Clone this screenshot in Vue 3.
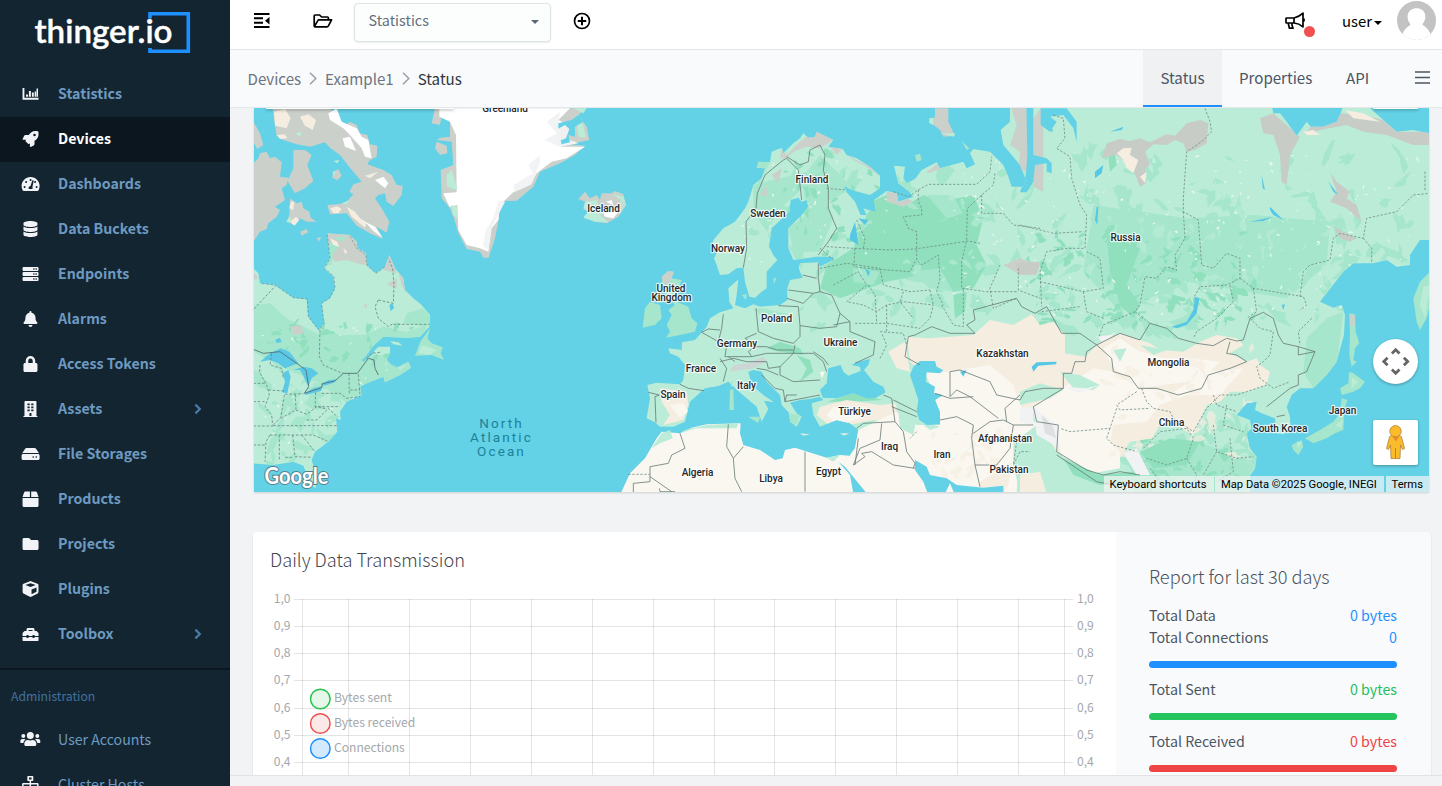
<script setup>
const menu = [
  { label: 'Statistics', icon: 'chart' },
  { label: 'Devices', icon: 'rocket', active: true },
  { label: 'Dashboards', icon: 'gauge' },
  { label: 'Data Buckets', icon: 'database' },
  { label: 'Endpoints', icon: 'server' },
  { label: 'Alarms', icon: 'bell' },
  { label: 'Access Tokens', icon: 'lock' },
  { label: 'Assets', icon: 'building', more: true },
  { label: 'File Storages', icon: 'hdd' },
  { label: 'Products', icon: 'box' },
  { label: 'Projects', icon: 'folder' },
  { label: 'Plugins', icon: 'cube' },
  { label: 'Toolbox', icon: 'toolbox', more: true },
]
const admin = [
  { label: 'User Accounts', icon: 'users' },
  { label: 'Cluster Hosts', icon: 'sitemap' },
]
const icons = {
  chart: { w: 512, d: 'M0 64h60v312h452v64H0zM112 272h64v72h-64zM204 160h64v184h-64zM300 208h60v136h-60zM388 176h48v168h-48zM448 80h48v264h-48z' },
  rocket: { w: 512, d: 'M505 19c-1-6-6-11-12-12C461 0 436 0 411 0 308 0 246 55 200 128H95c-16 0-35 12-43 26L3 253c-7 14 1 24 14 24h101l-19 26c-9 12-6 22 3 32l76 76c10 9 20 12 32 3l26-21v104c0 12 12 19 23 14l99-50c14-7 26-26 26-43V312c73-46 128-108 128-211 0-25 0-50-7-82zM384 168a40 40 0 1 1 0-80 40 40 0 0 1 0 80z' },
  gauge: { w: 576, d: 'M288 32C129 32 0 161 0 320c0 53 14 102 39 145 6 9 16 15 27 15h444c11 0 21-6 27-15 25-43 39-92 39-145C576 161 447 32 288 32zM96 384a32 32 0 1 1 0-64 32 32 0 0 1 0 64zm48-160a32 32 0 1 1 0-64 32 32 0 0 1 0 64zm144-128a32 32 0 1 1 0 64 32 32 0 0 1 0-64zm58 256c4 9 6 21 6 32 0 12-3 23-9 32H233c-6-9-9-20-9-32 0-34 26-62 60-64l56-171c10-28 52-16 46 15zm86-128a32 32 0 1 1 0-64 32 32 0 0 1 0 64zm48 160a32 32 0 1 1 0-64 32 32 0 0 1 0 64z' },
  database: { w: 448, d: 'M448 73v46c0 40-100 73-224 73S0 159 0 119V73C0 33 100 0 224 0s224 33 224 73zm0 103v103c0 40-100 73-224 73S0 319 0 279V176c48 33 136 48 224 48s176-15 224-48zm0 160v103c0 40-100 73-224 73S0 479 0 439V336c48 33 136 48 224 48s176-15 224-48z' },
  server: { w: 512, d: 'M24 32h464l24 24v80l-24 24H24L0 136V56zm320 40v48h40V72zm72 0v48h40V72zM24 192h464l24 24v80l-24 24H24L0 296v-80zm320 40v48h40v-48zm72 0v48h40v-48zM24 352h464l24 24v80l-24 24H24L0 456v-80zm320 40v48h40v-48zm72 0v48h40v-48z' },
  bell: { w: 448, d: 'M224 512c35 0 64-29 64-64H160c0 35 28 64 64 64zm215-150c-19-21-55-52-55-154 0-78-54-140-128-155V32a32 32 0 1 0-64 0v21C118 68 64 130 64 208c0 102-36 133-55 154-19 22-5 54 23 54h384c28 0 42-33 23-54z' },
  lock: { w: 448, d: 'M400 224h-24v-72a152 152 0 1 0-304 0v72H48c-26 0-48 22-48 48v192c0 26 22 48 48 48h352c26 0 48-22 48-48V272c0-26-22-48-48-48zm-104 0H152v-72a72 72 0 1 1 144 0z' },
  building: { w: 448, d: 'M436 480h-20V24c0-13-11-24-24-24H56C43 0 32 11 32 24v456H12c-7 0-12 5-12 12v20h448v-20c0-7-5-12-12-12zM128 76h72v56h-72zm0 96h72v56h-72zm0 96h72v56h-72zm64 212V384h64v96zm128-156h-72v-56h72zm0-96h-72v-56h72zm0-96h-72V76h72z' },
  hdd: { w: 576, d: 'M576 304v96c0 26-22 48-48 48H48c-26 0-48-22-48-48v-96c0-26 22-48 48-48h480c26 0 48 22 48 48zm-48-80a80 80 0 0 1 31 6L462 85c-10-13-25-21-41-21H155c-16 0-31 8-41 21L17 230a80 80 0 0 1 31-6zM352 325v54h40v-54zm96 0v54h40v-54z' },
  box: { w: 512, d: 'M509 184L464 46c-6-19-24-30-46-30H276v176h234c0-3 0-5-1-8zM236 16H94c-20 0-38 11-44 30L3 184l-2 8h235zM0 224v240c0 26 22 48 48 48h416c26 0 48-22 48-48V224z' },
  folder: { w: 512, d: 'M464 128H272l-64-64H48C22 64 0 86 0 112v288c0 26 22 48 48 48h416c26 0 48-22 48-48V176c0-26-22-48-48-48z' },
  cube: { w: 512, d: 'M239 6L33 84C14 91 2 108 2 128v225c0 18 10 35 26 43l206 110c14 7 30 7 44 0l206-110c16-8 26-25 26-43V128c0-20-12-37-31-44L273 6c-11-4-23-4-34 0zm17 62l165 58v2l-165 67L91 128v-2zm32 356V275l160-65v132z' },
  toolbox: { w: 512, d: 'M503 215l-46-46c-6-6-14-9-22-9h-51v-48c0-26-22-48-48-48H176c-26 0-48 22-48 48v48H77c-8 0-16 3-22 9L9 215c-6 6-9 14-9 22v83h128v-32h64v32h128v-32h64v32h128v-83c0-8-3-16-9-22zm-183-55H192v-32h128zm64 224h-64v-32H192v32h-64v-32H0v96c0 18 14 32 32 32h448c18 0 32-14 32-32v-96H384z' },
  users: { w: 640, d: 'M96 224a64 64 0 1 0 0-128 64 64 0 0 0 0 128zm448 0a64 64 0 1 0 0-128 64 64 0 0 0 0 128zm32 32h-64c-18 0-34 7-45 19 40 22 69 62 75 109h66c18 0 32-14 32-32v-32c0-35-29-64-64-64zm-256 0a112 112 0 1 0 0-224 112 112 0 0 0 0 224zm77 32h-8c-42 20-96 20-138 0h-8c-64 0-115 52-115 115v29c0 26 21 48 48 48h288c26 0 48-22 48-48v-29c0-63-52-115-115-115zm-224-13c-11-12-27-19-45-19H64c-35 0-64 29-64 64v32c0 18 14 32 32 32h66c6-47 35-87 75-109z' },
  sitemap: { w: 640, d: 'M128 352H32c-18 0-32 14-32 32v96c0 18 14 32 32 32h96c18 0 32-14 32-32v-96c0-18-14-32-32-32zm-24-80h192v48h48v-48h192v48h48v-57c0-21-18-39-39-39H344v-64h40c18 0 32-14 32-32V32c0-18-14-32-32-32H256c-18 0-32 14-32 32v96c0 18 14 32 32 32h40v64H95c-21 0-39 18-39 39v57h48zM280 50h80v60h-80zm88 302h-96c-18 0-32 14-32 32v96c0 18 14 32 32 32h96c18 0 32-14 32-32v-96c0-18-14-32-32-32zm240 0h-96c-18 0-32 14-32 32v96c0 18 14 32 32 32h96c18 0 32-14 32-32v-96c0-18-14-32-32-32z' },
}

const mapLabels = [
  [505, 111.5, 'Greenland'], [603.5, 212, 'Iceland'], [812, 183, 'Finland'], [768, 217, 'Sweden'],
  [728, 252, 'Norway'], [671, 291.5, 'United'], [671.5, 301, 'Kingdom'], [776.5, 322, 'Poland'],
  [840.5, 346, 'Ukraine'], [737, 347, 'Germany'], [701, 371.5, 'France'], [746.5, 388.5, 'Italy'],
  [673, 398, 'Spain'], [854.5, 415, 'Türkiye'], [889.5, 449.5, 'Iraq'], [942, 458, 'Iran'],
  [697.5, 475.5, 'Algeria'], [771, 481.5, 'Libya'], [828.5, 474.5, 'Egypt'], [1002.5, 356.5, 'Kazakhstan'],
  [1005, 442, 'Afghanistan'], [1009, 472.5, 'Pakistan'], [1125.5, 241, 'Russia'], [1168.5, 365.5, 'Mongolia'],
  [1171.5, 425.5, 'China'], [1280, 432, 'South Korea'], [1342.5, 414, 'Japan'],
]

// Deterministic vegetation patches, clipped to the land outlines
let seed = 11
const rnd = () => ((seed = (seed * 16807) % 2147483647) / 2147483647)
function patches(n, x, y, w, h, size) {
  let d = ''
  for (let i = 0; i < n; i++) {
    const cx = x + rnd() * w
    const cy = y + rnd() * h
    const r = size * (0.35 + rnd())
    const turn = rnd() * Math.PI
    const flat = 0.35 + rnd() * 0.5
    for (let k = 0; k < 9; k++) {
      const a = (k / 9) * Math.PI * 2
      const q = r * (0.4 + rnd() * 1.1)
      const px = Math.cos(a) * q * 1.4
      const py = Math.sin(a) * q * flat
      d += `${k ? 'L' : 'M'}${(cx + px * Math.cos(turn) - py * Math.sin(turn)).toFixed(0)} ${(cy + px * Math.sin(turn) + py * Math.cos(turn)).toFixed(0)}`
    }
    d += 'Z'
  }
  return d
}
const eastMid = patches(190, 400, 130, 2000, 560, 24) + patches(90, 1500, 950, 420, 220, 18)
const eastLight = patches(260, 700, 220, 1700, 450, 13)
const eastDark = patches(110, 1200, 380, 700, 290, 12) + patches(50, 480, 120, 330, 330, 11) + patches(26, 1560, 1000, 300, 150, 12)
const eastSpeck = patches(260, 1000, 150, 1400, 480, 3.6) + patches(60, 300, 130, 500, 350, 3.6)
const westMid = patches(60, 10, 760, 330, 320, 18)
const westDark = patches(36, 60, 660, 430, 110, 11)
const westSpeck = patches(60, 10, 650, 500, 400, 3.4)
const sand = patches(60, 1450, 720, 450, 330, 15) + patches(30, 940, 970, 220, 150, 12)

const eurasia = 'M105 952L80 940 90 880 82 840 110 833 180 838 190 825 195 780 175 755 150 745 145 730 185 735 186 712 225 705 260 665 270 640 300 622 340 610 328 590 325 550 355 523 350 570 345 600 375 610 400 598 420 605 480 600 502 585 502 550 510 525 548 518 536 490 540 475 595 472 600 485 640 465 640 455 590 455 520 465 505 430 505 370 545 330 565 305 560 285 545 290 535 278 512 285 508 320 455 370 447 425 460 450 472 465 440 500 440 550 425 560 405 578 388 575 375 530 370 488 350 490 325 508 300 510 290 480 282 460 292 440 275 425 280 405 310 370 345 350 375 310 385 290 400 240 425 220 435 190 410 188 415 170 450 172 455 140 485 128 490 145 520 115 540 100 550 85 565 98 585 95 590 80 640 105 625 125 668 132 680 150 710 160 750 185 780 212 780 250 750 270 705 258 670 242 680 262 705 290 722 330 740 330 730 310 768 322 762 285 800 258 830 265 835 290 880 275 868 260 835 235 822 182 855 185 850 220 860 235 885 222 905 195 950 172 960 190 1030 170 1040 190 1065 178 1050 145 1060 132 1110 140 1150 180 1165 215 1175 245 1210 245 1218 225 1200 180 1150 120 1142 75 1170 50 1170 0H1955L1960 25 1980 25 2000 50 2030 92 2060 50 2072 65 2110 65 2150 50 2162 25 2170 0H2240L2290 45 2330 80 2380 75 2450 90V405H2400L2370 450 2370 480 2330 485 2300 465 2260 475 2200 475 2170 500 2100 590 2140 608 2165 600 2175 630 2172 690 2150 770 2120 810 2080 850 2040 850 2015 870 2000 905 2010 935 2012 965 1990 988 1970 985 1965 940 1925 925 1905 915 1910 890 1880 895 1850 930 1890 945 1895 970 1880 985 1890 1030 1910 1055 1905 1090 1890 1112V1170H690L690 1050 705 1030 715 975 690 955 650 945 600 965 580 930 575 895 610 885 600 875 570 882 540 885 510 893 530 925 545 935 530 965 510 950 508 925 485 900 480 870 440 830 425 800 400 795 385 800 395 840 430 870 462 892 432 887 445 912 425 950 410 905 345 850 325 830 295 843 255 850 210 890 195 950 160 965 120 965Z'
const africa = 'M0 1170L30 1105 75 1060 110 1000 125 980 180 985 215 968 260 958 362 955 360 985 370 1020 420 1035 465 1065 488 1060 495 1035 525 1028 620 1058 660 1050 690 1052 700 1080 760 1170Z'
const america = 'M10 490L25 505 30 535 75 540 130 578 170 582 175 635 205 675 222 655 215 595 240 580 255 550 250 515 222 490 240 460 232 385 300 390 320 410 322 430 348 445 350 480 378 505 405 485 418 450 435 490 460 520 465 555 490 580 515 600 540 630 538 665 510 695 475 698 400 695 370 722 335 770 370 740 385 725 420 725 420 745 410 765 425 780 440 788 475 770 483 788 450 810 405 832 400 815 350 835 330 845 335 870 290 890 270 920 272 945 258 938 262 980 235 1010 195 1040 185 1065 205 1130 195 1150 180 1130 160 1082 130 1070 70 1080 10 1075Z'

const yTicks = ['1,0', '0,9', '0,8', '0,7', '0,6', '0,5', '0,4'].map((t, i) => ({ t, y: Math.round(67 + i * 27.15) + 0.5 }))
const vLines = [49.5, 95.5, 156.5, 217.5, 278.5, 339.5, 400.5, 461.5, 521.5, 582.5, 643.5, 704.5, 765.5, 811.5]
const legend = [
  { t: 'Bytes sent', c: 'green', y: 167 },
  { t: 'Bytes received', c: 'red', y: 191.5 },
  { t: 'Connections', c: 'blue', y: 216.5 },
]
</script>

<template>
  <div class="app">
    <aside class="sidebar">
      <div class="brand">
        <svg width="230" height="72" viewBox="0 0 230 72">
          <path d="M150 18.500V13.700H188.300V51.300H150V48" fill="none" stroke="#1e8fff" stroke-width="3.600" />
          <text x="34.500" y="43" textLength="138" lengthAdjust="spacingAndGlyphs" class="logo">thinger.io</text>
        </svg>
      </div>
      <nav>
        <a v-for="m in menu" :key="m.label" class="item" :class="{ active: m.active }">
          <span class="ico"><svg :viewBox="`0 0 ${icons[m.icon].w} 512`" height="16" :width="icons[m.icon].w / 30"><path :d="icons[m.icon].d" fill-rule="evenodd" /></svg></span>
          <span class="txt">{{ m.label }}</span>
          <svg v-if="m.more" class="chev" width="8" height="12" viewBox="0 0 8 12"><path d="M1.400 1.600L5.800 6 1.400 10.400" fill="none" stroke="currentColor" stroke-width="2.200" /></svg>
        </a>
      </nav>
      <div class="section">Administration</div>
      <nav>
        <a v-for="m in admin" :key="m.label" class="item thin">
          <span class="ico"><svg :viewBox="`0 0 ${icons[m.icon].w} 512`" height="16" :width="icons[m.icon].w / 31"><path :d="icons[m.icon].d" fill-rule="evenodd" /></svg></span>
          <span class="txt">{{ m.label }}</span>
        </a>
      </nav>
    </aside>

    <main class="main">
      <header class="topbar">
        <svg class="t-menu" width="16" height="16" viewBox="0 0 16 16"><path d="M0 1h15.500M0 5.300h9M0 9.700h9M0 14h15.500" stroke="#000" stroke-width="2" /><path d="M15.500 4v7.400L11 7.700z" /></svg>
        <svg class="t-folder" width="20" height="14" viewBox="0 0 20 14"><path d="M1.200 12V1.800Q1.200 1 2 1H6.600L8.600 3H14.400Q15.400 3 15.400 4V5.400M1.400 12.600L4.800 6.600Q5.200 5.800 6 5.800H18.600L15.400 11.800Q14.900 12.800 14 12.800H2Q1.200 12.800 1.200 12" fill="none" stroke="#000" stroke-width="1.700" stroke-linejoin="round" /></svg>
        <div class="select"><span>Statistics</span><i class="caret"></i></div>
        <svg class="t-plus" width="18" height="18" viewBox="0 0 18 18"><circle cx="9" cy="9" r="7.500" fill="none" stroke="#000" stroke-width="1.700" /><path d="M9 4.800v8.400M4.800 9h8.400" stroke="#000" stroke-width="2" /></svg>
        <div class="spacer"></div>
        <div class="horn">
          <svg width="20" height="18" viewBox="0 0 20 18"><path d="M1.500 6H9Q14 5 18 1.200V14.800Q14 11.400 9 11H1.500Q1 11 1 10.400V6.600Q1 6 1.500 6ZM9 6V11M3.200 11L4.400 16.200H8L7 13V11M19 6.500v3" fill="none" stroke="#000" stroke-width="1.700" stroke-linejoin="round" /></svg>
          <i class="dot"></i>
        </div>
        <div class="user">user<i class="caret dark"></i></div>
        <svg class="avatar" width="39" height="39" viewBox="0 0 40 40">
          <defs><clipPath id="av"><circle cx="20" cy="20" r="20" /></clipPath></defs>
          <g clip-path="url(#av)"><rect width="40" height="40" fill="#c3c3c3" /><path d="M5 36C7 28 12 26 14 24 8 17 11 7.500 20 7.500S32 17 26 24C28 26 33 28 35 36V40H5Z" fill="#fff" /></g>
        </svg>
      </header>

      <div class="subbar">
        <div class="crumbs">
          <span>Devices</span>
          <svg width="8" height="13" viewBox="0 0 8 13"><path d="M1 .8L6.800 6.500 1 12.200" fill="none" stroke="#99a1ab" stroke-width="1.500" /></svg>
          <span>Example1</span>
          <svg width="8" height="13" viewBox="0 0 8 13"><path d="M1 .8L6.800 6.500 1 12.200" fill="none" stroke="#99a1ab" stroke-width="1.500" /></svg>
          <span class="here">Status</span>
        </div>
        <div class="tabs">
          <span class="tab on">Status</span>
          <span class="tab props">Properties</span>
          <span class="tab api">API</span>
          <svg class="burger" width="15" height="13" viewBox="0 0 15 13"><path d="M0 1h15M0 6.500h15M0 12h15" stroke="#4b5563" stroke-width="1.600" /></svg>
        </div>
      </div>

      <section class="content">
        <div class="mapcard">
          <svg class="map" width="1175" height="384" viewBox="254 108 1175 384">
            <defs>
              <clipPath id="ea"><path :d="eurasia" /></clipPath>
              <clipPath id="am"><path :d="america" /></clipPath>
            </defs>
            <rect x="254" y="108" width="1175" height="384" fill="#63d1e6" />

            <!-- North America, Greenland, Iceland -->
            <g transform="translate(250 105) scale(.33333)">
              <g fill="#cbd0cb">
                <path d="M10 50L30 85 40 120 22 132 10 110ZM10 175L25 160 30 145 50 140 60 160 75 155 95 172 90 215 115 218 110 240 95 250 105 285 75 305 90 315 80 335 55 355 50 372 30 380 10 410Z" />
                <path d="M130 135L165 135 185 150 172 180 190 228 165 250 135 265 112 228 130 190Z" />
                <path d="M68 10H245L240 45 265 40 285 62 300 50 320 60 330 85 352 90 360 118 382 122 380 155 360 165 352 178 400 195 425 210 440 240 458 242 455 270 430 303 410 290 405 265 385 270 375 280 395 310 418 350 410 383 380 365 398 402 360 385 320 362 290 325 240 328 232 300 265 298 290 290 310 268 298 260 310 238 335 230 295 182 270 150 240 128 225 112 180 125 140 118 100 105 80 92 75 60Z" />
                <path d="M120 280L140 295 155 290 160 310 178 320 182 338 200 350 170 350 150 340 135 360 110 350 118 330ZM150 380L170 372 175 382 155 392ZM200 400L213 395 208 410ZM250 200L265 192 275 212 262 226 247 218Z" />
              </g>
              <path d="M235 25L260 10 275 50 320 70 335 95 355 105 365 160 345 155 335 130 300 90 280 70 240 45Z" fill="#fff" />
              <path d="M278 100L300 95 318 138 285 125ZM375 225L400 215 415 235 405 250Z" fill="#fff" />
              <path d="M72 20L105 12 122 40 110 70 75 62ZM150 35L175 28 198 45 188 75 165 62ZM240 310L262 304 275 312 265 325 250 325ZM290 305L315 320 330 340 350 352 345 368 325 352 305 335ZM345 212L385 200 360 220ZM122 290L133 290 130 315 118 310ZM120 350L138 335 148 345 133 362ZM80 90L105 88 112 100 90 102Z" fill="#f4ede0" />
              <path d="M345 350L375 365 398 398 370 378Z" fill="#fff" />
              <path d="M135 85L155 80 150 95ZM250 168L268 165 262 175ZM108 350L122 335 125 352ZM248 200L255 198 252 218ZM275 295L300 285 290 298Z" fill="#bbecd8" />

              <path :d="america" fill="#bbecd8" />
              <g clip-path="url(#am)">
                <path d="M10 600L60 595 110 640 190 680 215 690 220 668 270 690 340 690 400 665 470 680 530 660 520 710 400 700 350 750 460 750 490 800 330 870 300 900 200 830 100 790 10 740Z" fill="#a6e6cd" />
                <path d="M470 625L520 610 545 640 530 665 460 655Z" fill="#a6e6cd" />
                <path :d="westMid" fill="#a6e6cd" /><path :d="westDark" fill="#90e0be" /><path :d="westSpeck" fill="#e4f6ec" />
                <path d="M225 380H310L345 440 355 480 330 478 290 465 255 470 230 440Z" fill="#cbd0cb" />
                <path d="M235 420L250 405 265 425 250 445 245 480 230 480ZM250 400L290 393 280 410Z" fill="#a6e6cd" />
                <path d="M240 400L262 410 268 425 250 420ZM280 430L292 440 285 448Z" fill="#f4ede0" />
                <path d="M408 440H420L440 505 400 495ZM415 535L440 520 440 550 412 540ZM120 665L155 660 160 685 130 690ZM10 500L25 520 10 525ZM340 600L352 597 348 612ZM445 500L470 530 468 565 455 540Z" fill="#cbd0cb" />
                <path d="M30 770L60 745 92 730 118 740 145 775 105 790 85 775 60 765ZM98 805L115 795 122 815 112 865 96 862 105 830ZM130 795L160 785 185 790 205 805 185 820 175 845 160 812 150 795ZM163 865L190 850 217 843 214 857 168 870ZM213 838L235 826 262 822 250 834 222 842ZM75 705L90 698 95 712 80 714ZM418 600L428 595 432 610 422 618ZM335 765L380 728 370 745 340 770Z" fill="#5bc8e6" />
              </g>
              <path d="M540 670L532 700 545 715 578 727 572 745 582 765 545 750 495 752 510 712Z" fill="#a6e6cd" />
              <path d="M515 720L560 735 540 750 505 745ZM420 708L445 712 458 722 430 718ZM425 775L445 788 470 778 452 795Z" fill="#bbecd8" />
              <g fill="none" stroke="#668684" stroke-width="2.400" stroke-dasharray="8 5">
                <path d="M12 612L76 543M210 675L208 755 220 780 265 800 280 805M385 585L430 595 432 540 428 490 415 460M385 585L375 605 385 640 415 665 430 655M430 658L538 658M65 745L60 780 95 790 100 820M55 855L105 858M30 780L28 800 50 840 58 870 45 905 65 930 68 960M10 835L45 835M10 890L45 890M105 868L160 866M103 870L92 938 68 962M136 868L138 915 92 940M138 915L170 928 200 905 230 912M197 862L195 905 270 905M215 865H270L290 880 330 875M70 962H262M10 963H70M60 990L48 1010 45 1070M60 990H190L232 1008M88 990V1068M128 990L135 1055 185 1057M105 1057H130M155 990L195 1040M10 1020H48M170 945L200 945 235 910 262 935M297 805L298 870M325 808L330 870M300 855H330M390 742L365 745 350 760" />
                <path d="M232 388L240 460 224 490 252 515 255 550 238 580 215 595 222 655 207 675 175 635 172 582 130 578 76 540 30 535M300 393L320 430 348 450 350 480 378 505 405 485" stroke-width="1.800" />
              </g>
              <path d="M10 733L40 745 90 740 130 768 168 795 176 845 163 865 215 848 217 836 255 828 280 805 322 805 355 760 372 765 375 790 385 810" fill="none" stroke="#557277" stroke-width="2.700" />

              <!-- Greenland -->
              <path d="M555 10H1010L985 30 1010 65 1018 105 960 118 1005 122 975 150 930 175 870 200 850 245 800 287 765 288 748 320 745 350 735 400 716 458 700 458 690 440 650 432 625 385 612 340 600 310 575 280 572 195 610 180 605 110 560 105 572 98 600 95 600 50 575 30 570 60 545 55Z" fill="#cbd0cb" />
              <path d="M560 110L590 122 592 145 570 150 555 130Z" fill="#cbd0cb" />
              <path d="M568 10H960L925 45 955 60 930 100 980 112 930 125 1005 125 950 160 905 170 860 205 840 240 790 262 765 285 750 300 745 345 725 370 715 440 690 430 650 420 625 375 622 300 598 305 580 265 620 262 618 90 600 50 568 35Z" fill="#fff" />
              <path d="M890 50L930 20 925 60 950 70 930 95 985 115 930 125 885 105 920 85ZM870 170L870 150 835 180 850 205 790 240 795 260 845 238ZM765 290L745 288 730 340 705 380 700 425 715 432 724 370Z" fill="#f2f3f4" />
              <path d="M590 210L605 195 622 255 590 245ZM605 300L620 305 622 340 608 330ZM980 50L995 40 1008 98 985 95ZM970 10H1010L1000 25Z" fill="#bbecd8" />
              <path d="M925 55L965 45 985 30 1000 50 975 65 975 95 955 90 960 112 935 118 930 100 950 70 925 70Z" fill="#63d1e6" />
              <path d="M930 68L945 60 958 72 948 100 928 108Z" fill="#eff0ef" />

              <path d="M985 282L1005 260 1020 280 1040 270 1050 285 1055 265 1085 265 1095 258 1120 268 1128 300 1105 335 1070 355 1035 350 1020 338 1005 340 1015 320 1000 312 1018 295Z" fill="#cbd0cb" />
              <path d="M1005 290L1040 285 1045 300 1080 315 1050 330 1075 352 1035 350 1000 338 1015 318 1000 310ZM1088 268L1120 275 1128 300 1110 310 1112 285Z" fill="#bbecd8" />
              <path d="M1060 325L1110 315 1090 340 1065 335ZM1068 290L1085 285 1090 300Z" fill="#fff" />
            </g>

            <!-- Europe, Asia, North Africa -->
            <g transform="translate(620 105) scale(.33333)">
              <path :d="africa" fill="#faf7f1" />
              <path d="M125 985L150 975 158 1000 120 1015 95 1030ZM195 975L260 960 355 955 350 970 230 970 180 985ZM620 1058L660 1050 640 1070Z" fill="#bbecd8" />
              <path :d="eurasia" fill="#bbecd8" />
              <g clip-path="url(#ea)">
                <path :d="eastMid" fill="#a6e6cd" />
                <path d="M400 240L480 220 560 200 600 150 640 190 700 250 620 290 640 340 600 440 520 440 505 370 560 330 550 250 480 310 440 380 400 320ZM1420 300L1700 340 1900 330 2130 350 2120 480 2000 580 1700 530 1500 620 1390 500ZM1560 1040L1760 1020 1880 1060 1880 1165 1540 1165ZM2060 700L2120 640 2170 620 2150 780 2080 850 2050 800Z" fill="#a6e6cd" />
                <path d="M765 285L800 270 860 300 910 270 960 290 1060 270 1090 340 1070 420 1100 480 1060 550 1000 560 900 510 800 530 660 580 600 550 620 480 700 430 730 350Z" fill="#90e0be" />
                <path d="M870 500L960 490 1000 560 930 550ZM920 270L1000 270 1030 330 980 340ZM700 490L780 500 760 540 700 530Z" fill="#a6e6cd" />
                <path :d="eastLight" fill="#bbecd8" opacity=".6" />
                <path d="M780 310L870 310 960 350 1040 320 1050 440 960 480 860 460 760 470 730 400Z" fill="#90e0be" />
                <path :d="eastDark" fill="#90e0be" />
                <path d="M440 730L480 710 540 730 550 750 480 740ZM530 750L570 765 580 800 540 830 560 790ZM620 890L700 865 790 885 700 890ZM1460 390L1560 430 1520 540 1560 600 1540 640 1500 600 1470 500ZM1000 570L1040 560 1035 620 1005 640Z" fill="#90e0be" />
                <path :d="eastSpeck" fill="#e6f7ee" />

                <!-- tundra and bare rock -->
                <path d="M485 130L500 150 540 110 565 90 595 80 640 105 600 130 560 125 520 140 500 160 480 160ZM630 125L668 130 650 150ZM680 150L750 185 780 215 740 185 700 165ZM1170 0H1220L1222 200 1195 195 1200 140 1170 120 1190 60ZM800 260L835 265 880 290 850 305 800 290ZM920 200L960 172 965 190 925 205ZM1150 480L1200 460 1260 480 1250 510 1200 510ZM455 210L485 190 475 235ZM420 270L440 240 440 275ZM1240 40L1270 0V260L1240 245Z" fill="#cbd0cb" />
                <path d="M1460 115L1500 102 1530 108 1560 100 1590 112 1640 88 1665 92 1700 55 1740 45 1765 55 1760 115 1725 135 1700 140 1690 115 1665 105 1640 120 1600 118 1575 140 1590 175 1575 195 1578 235 1560 245 1540 195 1515 170 1490 150 1445 160ZM1920 40L1960 25 2000 60 2040 95 2010 150 2000 240 1985 230 1980 150 1960 90 1930 85ZM2130 200L2150 230 2190 260 2180 280 2210 300 2225 350 2180 310 2130 290 2150 260ZM2050 90L2072 65 2150 50 2160 25 2230 30 2290 45 2330 80 2430 80 2430 120 2380 120 2300 90 2230 80 2180 60 2100 75ZM2140 365L2210 400 2190 410 2160 400ZM1185 475L1260 470 1250 505 1200 510Z" fill="#c7ccc7" />
                <path d="M1490 145L1510 130 1535 128 1530 150 1555 165 1540 205 1520 190 1510 165ZM1560 215L1580 200 1575 235ZM2175 15L2230 25 2280 50 2240 45 2200 40ZM2050 80L2080 75 2100 90 2060 90Z" fill="#f4ede0" />
                <path d="M1465 155L1485 150 1490 180 1470 200Z" fill="#90e0be" />

                <!-- steppe -->
                <path d="M860 695L925 700 1060 690 1110 645 1180 660 1235 628 1260 660 1300 650 1335 690 1335 745 1395 755 1435 715 1500 685 1590 715 1620 735 1690 740 1740 710 1790 690 1850 700 1870 720 1830 745 1880 770 1910 760 1920 780 1950 800 1940 840 1880 860 1830 860 1800 890 1760 900 1720 990 1660 960 1600 1000 1530 1010 1500 1060 1400 1100 1310 1040 1235 920 1120 890 990 870 870 770Z" fill="#f4ede0" />
                <path d="M805 740L855 710 865 770 870 800 830 790ZM600 905L680 885 780 900 830 895 830 950 760 945 640 970 590 930ZM120 850L200 860 205 900 190 945 130 960 150 930 125 890Z" fill="#f4ede0" />
                <path d="M620 930L640 905 740 905 720 940 650 960ZM150 900L190 895 205 920 180 940ZM600 800L615 800 605 820Z" fill="#faf7f1" />
                <path d="M915 805L990 800 1110 780 1180 840 1200 900 1250 960 1200 1000 1190 1165H690V1055L715 975 830 920 890 960 960 960 945 870Z" fill="#faf7f1" />
                <path d="M835 920L890 940 880 990 840 970ZM830 890L890 895 890 935 830 905ZM890 945L960 965 930 975Z" fill="#bbecd8" />
                <path d="M1240 900L1310 860 1420 790 1480 800 1560 850 1660 860 1760 800 1870 790 1800 870 1700 870 1620 900 1580 950 1480 960 1470 1010 1500 1040 1500 1090 1420 1105 1330 1060 1310 1010Z" fill="#faf7f1" />
                <path d="M1450 730L1500 700 1560 740 1630 760 1720 760 1800 770 1760 810 1700 830 1560 850 1480 790Z" fill="#faf7f1" />
                <path :d="sand" fill="#f4ede0" opacity=".75" />
                <path d="M1200 860L1260 835 1330 855 1290 880 1200 900ZM1320 800L1380 810 1440 840 1420 855 1360 850ZM1180 1010L1240 970 1320 1050 1430 1110 1380 1165H1200L1180 1080ZM1480 735L1520 730 1500 770ZM1560 720L1640 735 1600 750ZM1590 1010L1620 960 1660 950 1700 980 1650 1000Z" fill="#bbecd8" />
                <path d="M1240 905L1310 960 1320 1030 1250 990ZM1510 1045L1550 1030 1590 1110 1550 1110ZM1200 910L1240 905 1240 960 1200 950ZM1330 845L1400 850 1440 840 1380 865ZM1430 695L1470 690 1490 680 1450 715Z" fill="#f1f2f3" />
                <path d="M1265 930L1300 965 1308 1000 1275 985Z" fill="#dfe0e2" />
                <path d="M1330 1060L1440 1110 1540 1100 1570 1130 1440 1140 1360 1110ZM1560 1040L1650 1000 1740 1010 1700 1080 1600 1090Z" fill="#90e0be" />
                <path d="M1080 1130L1150 1090 1175 1070 1165 1140 1150 1165H1085ZM1200 1110L1260 1100 1280 1165H1200Z" fill="#f4ede0" />
                <path d="M385 775L430 755 440 770 400 790 330 800 340 780Z" fill="#cdd6d4" />

                <!-- inland water -->
                <path d="M625 790L662 780 670 800 685 812 722 798 720 785 695 780 710 772 750 762 745 780 732 795 760 830 790 845 797 862 765 880 740 880 700 865 650 880 608 878 600 855 620 835Z" fill="#63d1e6" />
                <path d="M880 785L900 768 945 768 950 785 970 795 960 805 920 802 918 830 945 845 942 865 970 870 945 885 960 920 960 958 920 960 898 945 890 920 895 885 870 810Z" fill="#63d1e6" />
                <path d="M1655 665L1700 650 1720 615 1725 575 1738 580 1730 625 1700 660 1670 670ZM1425 200L1450 180 1445 205 1425 220ZM1925 210L1935 255 1928 250ZM1950 305L1990 345 1960 330 1950 315ZM1890 350L1960 335 1930 348ZM1430 305H1435L1432 360 1425 345ZM2125 230L2155 270 2140 260ZM1235 785L1250 772 1310 770 1308 778 1255 782 1240 800ZM1470 80L1510 65 1505 75ZM1020 800L1040 795 1030 815ZM690 390L705 350 712 395 715 420 690 405ZM715 340L745 345 735 360ZM735 490L750 500 745 515ZM1985 600L1995 598 1990 615Z" fill="#56c8e6" />
                <path d="M1219 0H1240V100L1240 150 1280 160 1295 175 1295 205 1280 200 1280 175 1245 180 1240 230 1220 262 1200 262 1218 210 1222 150Z" fill="#63d1e6" />
                <path d="M1262 10H1340L1370 50 1370 110 1360 70 1330 30 1290 35 1310 50 1290 80 1262 60ZM1275 50L1300 75 1295 82Z" fill="#63d1e6" />
              </g>
              <path d="M655 1070L675 1085 740 1165H700L690 1110ZM885 1065L920 1085 930 1110 980 1120 1010 1140 1090 1148 1150 1142V1170H925L910 1130 885 1095Z" fill="#63d1e6" />
              <path d="M973 1170L990 1135 1005 1170Z" fill="#faf7f1" />
              <!-- islands -->
              <path d="M125 515L145 498 162 500 155 520 185 525 175 550 170 590 205 605 215 640 232 655 225 680 180 690 138 698 150 680 140 660 155 630 145 615 165 600 145 580 130 560ZM75 610L90 590 120 600 125 640 105 660 68 668ZM330 855L340 852 342 915 328 915ZM330 830L337 828 335 848ZM385 935L420 935 415 955ZM460 520L470 518 462 538ZM365 570L380 568 378 585ZM505 925L540 930 528 962 512 950ZM885 150L900 146 905 165 890 170ZM1025 108L1048 130 1040 135Z" fill="#a6e6cd" />
              <path d="M125 515L145 498 162 500 145 540 130 535Z" fill="#cbd0cb" />
              <path d="M945 10H985L985 50 1005 92 970 95 960 75 928 50 945 35Z" fill="#cbd0cb" />
              <path d="M928 40L940 38 940 60 928 55ZM960 85L1005 85 1000 95Z" fill="#bbecd8" />
              <path d="M0 275L18 300 0 325Z" fill="#bfe0d2" /><path d="M540 985L570 988 550 992ZM660 985L688 985 672 992Z" fill="#dfeee2" />
              <path d="M2188 625L2205 628 2207 680 2218 715 2205 730 2200 765 2210 770 2195 785 2188 750 2190 690ZM2187 800L2200 805 2235 830 2220 850 2200 860 2165 870 2160 850 2185 835ZM2165 880L2182 885 2172 920 2170 975 2145 985 2120 1000 2080 1015 2055 1000 2100 975 2140 950 2160 925ZM2015 1020L2045 1005 2050 1025 2035 1050 2020 1035ZM2400 530L2430 500V600L2420 640 2400 675 2390 650 2380 580Z" fill="#a6e6cd" />
              <path d="M2195 815L2215 830 2195 850ZM2145 960L2170 945 2165 970ZM2410 545L2430 540 2415 640 2400 600ZM2030 1010L2045 1012 2035 1030Z" fill="#bbecd8" />
              <path d="M2190 630L2205 632 2203 665 2190 660Z" fill="#cbd0cb" />

              <!-- state lines -->
              <g fill="none" stroke="#6d8c85" stroke-width="2.400" stroke-dasharray="7 5">
                <path d="M620 250L680 255M820 260L865 275 895 255 925 238 1070 238 1110 200 1115 155M895 255V290L905 310 905 330 850 335 865 370 890 380 890 465 905 480 955 450 960 520 950 560 970 600M1125 205L1120 240 1085 270 1042 310 1040 405 1025 470 1025 550 1100 560 1195 560M620 425L700 430 810 435 885 432 1045 408 1080 415M705 430L702 485 760 492 870 500 885 470M600 490L680 475 780 490 790 540 870 560 930 555M1085 270L1085 325 1150 325 1180 360 1260 370M640 540L715 500 740 540 680 590 730 600 770 620 800 600 850 590 940 600 930 640 900 670 800 655 700 655M745 540L765 570 770 650M850 560L840 590 880 640M800 600L800 680M965 600L1000 660 1030 665 1030 550M710 345L735 400 730 430M930 555L940 600M780 680L850 685 860 720M780 760L800 720 785 685M600 430L640 465M1140 480L1110 550 1120 610 1190 580M1195 490L1195 555 1260 580" />
                <path d="M1300 30L1330 40 1335 100 1310 130 1350 155 1355 220 1380 300 1400 330 1395 430 1340 430 1280 440 1260 500 1265 605M1200 360L1300 385 1390 380M1755 10L1770 50 1775 80 1745 110 1700 140 1690 280 1690 320 1735 345 1745 480 1780 490 1820 445 1860 460 1860 520 1820 540 1740 545 1720 580M1690 320L1695 400 1665 450 1670 495 1640 485 1610 520 1575 515 1560 600 1545 620 1590 655M1860 520L1900 550 2050 575 2060 600 2040 615M2040 575L2050 500 2070 480 2130 465 2140 400 2160 385 2230 400 2240 340 2330 320 2380 270 2430 265M2230 400L2255 430 2255 475M2415 200V255M1260 530L1390 560 1450 550 1440 460 1400 440M1390 560L1400 620 1450 640M1265 620L1380 605M1545 620L1450 660 1435 700M1830 540L1840 590 1790 640 1730 680 1720 700M1900 550L1910 620 1880 640M2075 640L2035 680 2040 720M1890 640L1920 670 1960 680 1950 750 1930 770 1910 785 1920 820 1960 850 1985 840 2010 830M1565 850L1580 890 1600 910 1650 920 1660 940 1720 980 1760 910 1800 870 1850 870 1940 840M1550 860L1490 900 1500 915 1590 910M1490 910L1470 970 1350 980 1320 970M1470 970L1460 1000 1480 1020 1550 1040M1570 1030L1620 980 1700 970 1720 1000 1700 1060 1640 1080 1580 1060M1780 960L1790 1040 1850 1060 1900 1055M1820 900L1810 960 1870 980M1700 1060L1730 1110 1710 1165M1790 1040L1750 1110M1590 1090L1620 1130 1580 1165M1830 1000L1840 1100 1790 1130" />
                <path d="M25 1108H90M1190 1010L1180 1080 1200 1040 1230 1040M1780 870L1790 900 1850 920M890 980L870 1000" />
              </g>
              <!-- country borders -->
              <g fill="none" stroke="#667975" stroke-width="2.400" stroke-linejoin="round">
                <path d="M370 488L380 430 378 350 408 310 412 265 435 210 490 165 500 160 535 195 545 285M500 155L540 180 565 170 570 135 600 120 615 150 610 195 625 250 625 310 650 370 625 410 595 450M595 475L595 520 600 560 635 570 660 625 650 665 600 670 540 662 535 605 475 602M548 510L590 520M505 555L580 565 600 560M500 580L550 595 580 565M408 610L415 680 460 700 520 715 540 695 540 662M660 625L690 650 690 680 765 710 760 750 705 775M640 660L690 650M310 628L305 670 295 710 245 682M245 682L265 672 300 675M295 710L320 720 315 755 395 755 385 740 410 720 375 700 410 685M395 755L440 745 520 745 525 720M300 760L320 790 310 830M300 770L340 760 380 770 440 770M440 770L445 790 480 785 520 745 580 745 610 770 620 800M480 785L480 810 520 830 600 825M425 810L465 850 490 855 495 890 600 870M410 790L440 795 475 810M180 838L205 850 252 857M108 952L105 875 118 870 85 862M495 890L500 870 530 870M395 725L440 725 470 735 520 735M325 755L345 770M580 740L610 760 625 780" />
                <path d="M855 755L865 695 885 690 935 665 990 685 1065 685 1040 660 1065 645 1060 615 1190 580 1205 605 1245 625 1280 605 1325 685 1380 685 1430 720 1500 685 1560 705 1590 655 1640 670 1675 700 1730 715 1780 722 1820 700 1850 708 1870 705 1890 640 1930 622 1960 640 1975 690 1990 715 2035 725 2085 740 2060 800 2035 810 2035 840 2010 850 1940 905M1430 720L1400 740 1395 770 1365 770 1355 805 1330 805 1330 850 1240 905M1430 720L1475 760 1480 800 1530 815 1555 850 1610 850 1675 870 1745 850 1765 810 1830 790 1880 770 1850 750 1820 745 1830 710M2035 725L2035 750 2085 740M1970 935L1995 930M855 755L900 780M990 875V800L1020 795 1110 830 1130 870 1200 885 1215 860 1270 850 1330 850M990 875L1010 855 1050 875 1135 940M945 865L990 880 1060 875M1160 950L1155 910 1200 870M1240 905L1250 950 1315 960 1310 1040 1400 1095 1450 1110 1500 1100 1560 1110M960 945L1010 935 1060 960 1055 1000 1065 1080 1130 1080 1170 1030 1180 960 1150 945 1110 950 1060 985M1065 1080L1080 1145M1180 960L1240 960M1310 1050L1430 1130 1480 1140" />
                <path d="M710 970L730 955 825 950 815 880 790 870M825 950L850 980 860 1040 885 1075 880 1090M820 885L890 920M815 905L890 935M720 1030L780 1005 785 955M720 1030L700 1080 735 1055 725 1045 755 1040 820 1080 885 1090M715 1000L705 1080M325 958L320 1025 340 1060 345 1120 365 1160M370 1025L340 1060M555 1040V1160M180 985L195 1030 155 1050 145 1075 90 1085 90 1130 40 1135V1165M90 1115L155 1160M165 1160H120L118 1150" />
              </g>
            </g>

            <g class="mlabel"><text v-for="l in mapLabels" :key="l[2]" :x="l[0]" :y="l[1]" text-anchor="middle">{{ l[2] }}</text></g>
            <g class="ocean"><text x="501.5" y="428">North</text><text x="501.5" y="442">Atlantic</text><text x="501.5" y="456">Ocean</text></g>
            <text class="google" x="264.5" y="483.5" textLength="64" lengthAdjust="spacingAndGlyphs">Google</text>
          </svg>
          <div class="peek left"></div>
          <div class="peek right"></div>
          <div class="pan"><svg width="45" height="45" viewBox="0 0 45 45"><path d="M18.900 14.500l3.800-3.800 3.800 3.800M18.900 30.500l3.800 3.800 3.800-3.800M14.600 18.700l-3.800 3.800 3.800 3.800M30.900 18.700l3.800 3.800-3.800 3.800" fill="none" stroke="#666" stroke-width="2.800" /></svg></div>
          <div class="peg"><svg width="45" height="45" viewBox="0 0 45 45"><g fill="#fbbc2b" stroke="#a6762c" stroke-width=".7"><path d="M16.500 17Q17 15.500 19 15.500H26Q28 15.500 28.500 17L31.500 28.500 29.500 29.500 27.500 25 27 38.500H18L17.500 25 15.500 29.500 13.500 28.500Z" /><circle cx="22.500" cy="11.300" r="5.700" /></g><path d="M19.500 16.500H26L22.800 21.500Z" fill="#e58a2e" /><path d="M22.500 28v10" stroke="#a6762c" stroke-width=".8" /></svg></div>
          <div class="attrib"><span class="a1">Keyboard shortcuts</span><span class="a2">Map Data ©2025 Google, INEGI</span><span class="a3">Terms</span></div>
        </div>

        <div class="stats">
          <div class="chart">
            <h3>Daily Data Transmission</h3>
            <svg width="863" height="260" viewBox="0 0 863 260">
              <g stroke="#000" stroke-opacity=".105">
                <path v-for="v in vLines" :key="v" :d="`M${v} 67V260`" />
                <path v-for="t in yTicks" :key="t.t" :d="`M41 ${t.y}H820`" />
              </g>
              <g class="ticks">
                <template v-for="t in yTicks" :key="t.t">
                  <text x="37.5" :y="t.y + 3.5" text-anchor="end">{{ t.t }}</text>
                  <text x="824" :y="t.y + 3.5">{{ t.t }}</text>
                </template>
                <template v-for="l in legend" :key="l.t">
                  <circle cx="67.3" :cy="l.y" r="9.8" :class="l.c" />
                  <text x="81" :y="l.y + 3">{{ l.t }}</text>
                </template>
              </g>
            </svg>
          </div>
          <div class="report">
            <h3>Report for last 30 days</h3>
            <div class="row"><span>Total Data</span><b class="blue">0 bytes</b></div>
            <div class="row"><span>Total Connections</span><b class="blue">0</b></div>
            <div class="bar blue"></div>
            <div class="row"><span>Total Sent</span><b class="green">0 bytes</b></div>
            <div class="bar green"></div>
            <div class="row"><span>Total Received</span><b class="red">0 bytes</b></div>
            <div class="bar red"></div>
          </div>
        </div>
      </section>
      <footer class="foot"></footer>
    </main>
  </div>
</template>

<style>
html, body { margin: 0; overflow: hidden; }
</style>

<style scoped>
.app { display: flex; width: 1442px; height: 786px; overflow: hidden; font-family: "Noto Sans CJK SC", "Noto Sans", sans-serif; font-size: 14.4px; color: #4b5563; }
.sidebar { width: 230px; flex: none; height: 786px; overflow: hidden; background: #142532; }
.brand { height: 72px; }
.logo { font-family: Lato, sans-serif; font-weight: 600; font-size: 33px; fill: #fff; stroke: #fff; stroke-width: .4px; }
.item { height: 45px; display: flex; align-items: center; color: #6d9ac0; font-weight: 700; font-size: 14.2px; line-height: 20px; }
.item.active { background: #0b161e; color: #fff; }
.item.thin { font-weight: 400; }
.ico { width: 61px; display: flex; justify-content: center; flex: none; margin-right: -3px; padding-bottom: 2px; }
.thin .ico { padding-bottom: 0; }
.ico svg { fill: #f1f3f6; }
.txt { flex: 1; padding-bottom: 4px; }
.thin .txt { padding-bottom: 0; font-size: 14.15px; }
.chev { color: #4a7ba6; margin: 0 28px 2px 0; }
.section { border-top: 2px solid #0b161e; margin-top: 11px; height: 48px; padding: 0 0 0 11px; line-height: 52px; font-size: 12.2px; color: #42729c; box-sizing: border-box; }

.main { width: 1212px; display: flex; flex-direction: column; background: #f2f3f5; }
.topbar { height: 50px; box-sizing: border-box; border-bottom: 1px solid #e5e7ea; background: #fff; display: flex; align-items: flex-start; flex: none; }
.t-menu { margin: 13px 0 0 24px; }
.t-folder { margin: 14px 0 0 43px; }
.select { margin: 3px 0 0 21px; width: 197px; height: 39px; box-sizing: border-box; border: 1px solid #dde4e6; border-radius: 4px; background: #fcfefe; box-shadow: 0 1px 2px rgba(0, 0, 0, .08); display: flex; align-items: center; justify-content: space-between; padding: 0 11px 2px 13.5px; color: #64707d; line-height: 20px; }
.select span { padding-bottom: 3px; }
.caret { width: 0; height: 0; border: 4px solid transparent; border-top-color: #5b6673; border-bottom: 0; }
.t-plus { margin: 12px 0 0 22px; }
.spacer { flex: 1; }
.horn { position: relative; width: 20px; height: 30px; margin: 12px 37px 0 0; }
.dot { position: absolute; left: 19px; top: 14px; width: 11px; height: 11px; border-radius: 50%; background: #f05050; }
.user { color: #000; line-height: 20px; margin: 11px 15px 0 0; display: flex; align-items: center; gap: 2px; font-size: 14.9px; }
.caret.dark { border-top-color: #000; margin-top: 4px; }
.avatar { margin: 1px 6px 0 0; }

.subbar { height: 58px; box-sizing: border-box; border-bottom: 1px solid #e5e7ea; background: #f9fafc; display: flex; justify-content: space-between; flex: none; }
.crumbs { display: flex; align-items: center; gap: 8px; padding: 0 0 2px 17.5px; color: #6b7480; line-height: 20px; font-size: 15.1px; }
.crumbs svg { position: relative; top: 1px; }
.here { color: #2e3640; }
.tabs { display: flex; line-height: 54px; height: 57px; font-size: 15.1px; }
.tab.on { width: 79px; text-align: center; background: #f0f1f3; box-shadow: inset 0 -2px #1e8fff; }
.props { margin-left: 17px; width: 73px; }
.api { margin-left: 34px; width: 23px; }
.burger { margin: 21px 12px 0 46px; }

.content { height: 667px; overflow: hidden; flex: none; padding: 0 11px 0 23px; }
.mapcard { position: relative; width: 1175px; height: 384px; margin-left: 1px; box-shadow: 0 1px 2px rgba(0, 0, 0, .15); overflow: hidden; }
.map { display: block; }
.mlabel text { font: 500 10px Roboto, sans-serif; fill: #24282b; stroke: #fff; stroke-opacity: .75; stroke-width: 2.4px; paint-order: stroke; stroke-linejoin: round; }
.ocean text { font: 400 13.5px Roboto, sans-serif; fill: #1d8299; letter-spacing: 2.1px; text-anchor: middle; }
.google { font: 700 22px Lato, sans-serif; fill: #fff; stroke: #58808b; stroke-width: 2px; paint-order: stroke; }
.peek { position: absolute; top: 0; height: 1px; background: #fff; box-shadow: 0 1px 3px rgba(0, 0, 0, .5); border-radius: 0 0 2px 2px; }
.peek.left { left: 12px; width: 188px; }
.peek.right { left: 1119px; width: 45px; }
.pan, .peg { position: absolute; left: 1119px; width: 45px; height: 45px; background: #fff; box-shadow: 0 1px 3px rgba(0, 0, 0, .3); }
.pan { top: 231px; border-radius: 50%; }
.peg { top: 312px; border-radius: 2px; }
.attrib { position: absolute; right: 0; bottom: 0; display: flex; font: 400 11.2px/17px Roboto, sans-serif; color: #000; white-space: nowrap; }
.attrib span { background: rgba(245, 245, 245, .7); box-sizing: border-box; height: 16px; }
.a1 { width: 110px; padding-left: 5.5px; margin-right: 1px; }
.a2 { width: 169px; padding-left: 6px; margin-right: 2px; }
.a3 { width: 43px; padding-left: 5.5px; }

.stats { margin-top: 40px; width: 1178px; height: 280px; display: flex; background: #f9fafc; border-radius: 4px; overflow: hidden; box-shadow: 0 1px 2px rgba(0, 0, 0, .12); }
.chart { width: 863px; background: #fff; position: relative; }
h3 { font-weight: 300; font-size: 18.2px; line-height: 26px; margin: 0; color: #3f4650; }
.chart h3 { position: absolute; left: 17px; top: 14px; }
.chart svg { display: block; }
.ticks text { font-size: 12.1px; fill: #a3a7ac; }
circle.green { fill: #e4f7e9; stroke: #27c24c; stroke-width: 1.5; }
circle.red { fill: #fde8e8; stroke: #f05050; stroke-width: 1.5; }
circle.blue { fill: #d2e9ff; stroke: #1e8fff; stroke-width: 1.5; }
.report { padding: 31px 34px 0 33px; flex: 1; }
.report h3 { margin-bottom: 16px; color: #4a525d; }
.row { display: flex; justify-content: space-between; height: 22px; line-height: 20px; font-size: 14.25px; }
.row b { font-weight: 400; }
.row b.blue { color: #1e8fff; }
.row b.green { color: #23c05c; }
.row b.red { color: #ef4444; }
.bar { height: 7px; border-radius: 4px; margin: 12px 0 11px; }
.bar.blue { background: #1e8fff; }
.bar.green { background: #24c55e; }
.bar.red { background: #ef4444; }
.foot { flex: 1; border-top: 1px solid #e1e3e7; background: #f2f3f5; }
</style>
